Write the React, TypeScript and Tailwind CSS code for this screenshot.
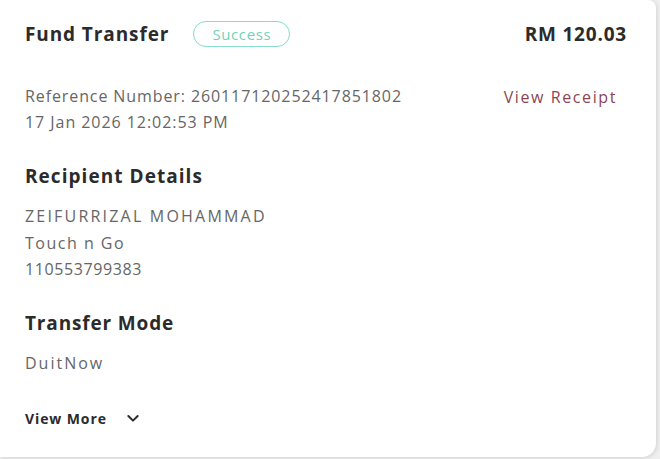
export default function App() {
  return (
    <div className="h-[459px] w-[660px] overflow-hidden bg-[#efefef]" style={{ fontFamily: '"Open Sans", sans-serif' }}>
      <div className="flex h-[457px] w-[656px] flex-col rounded-tr-[8px] rounded-br-[14px] bg-white pl-[25px] pr-[29px] pt-[19px] shadow-[1px_1px_4px_rgba(0,0,0,0.12)]">
        <div className="flex h-[30px] items-center">
          <h1 className="text-[19px] font-bold tracking-[0.9px] text-[#2b2b2b]">Fund Transfer</h1>
          <span className="ml-[24px] flex h-[26px] w-[97px] items-center justify-center rounded-full border-[1.5px] border-[#86dcc6] text-[15px] tracking-[0.6px] text-[#6fd3b8]">
            Success
          </span>
          <span className="ml-auto text-[19px] font-bold tracking-[0.8px] text-[#2b2b2b]">RM 120.03</span>
        </div>

        <div className="mt-[34px] flex items-start justify-between">
          <div className="text-[16px] leading-[26px] text-[#666666]">
            <p className="tracking-[0.9px]">Reference Number: 260117120252417851802</p>
            <p className="tracking-[0.95px]">17 Jan 2026 12:02:53 PM</p>
          </div>
          <a className="mr-[10px] mt-[1px] text-[16px] leading-[26px] tracking-[1.6px] text-[#8a4652]">View Receipt</a>
        </div>

        <h2 className="mt-[26px] text-[19px] font-bold leading-[30px] tracking-[1.05px] text-[#2b2b2b]">Recipient Details</h2>
        <div className="mt-[12px] text-[16px] leading-[26.5px] text-[#666666]">
          <p className="tracking-[2.2px]">ZEIFURRIZAL MOHAMMAD</p>
          <p className="tracking-[1.5px]">Touch n Go</p>
          <p className="tracking-[0.6px]">110553799383</p>
        </div>

        <h2 className="mt-[25px] text-[19px] font-bold leading-[30px] tracking-[0.85px] text-[#2b2b2b]">Transfer Mode</h2>
        <p className="mt-[12px] text-[16px] leading-[26px] tracking-[2px] text-[#666666]">DuitNow</p>

        <button className="mt-[32px] flex items-center gap-[18px] self-start text-[14px] font-bold tracking-[0.9px] text-[#2b2b2b]">
          View More
          <svg width="16" height="16" viewBox="0 0 24 24" fill="none" stroke="#2b2b2b" strokeWidth="3" strokeLinecap="round" strokeLinejoin="round">
            <path d="M5 9l7 7 7-7" />
          </svg>
        </button>
      </div>
    </div>
  );
}
